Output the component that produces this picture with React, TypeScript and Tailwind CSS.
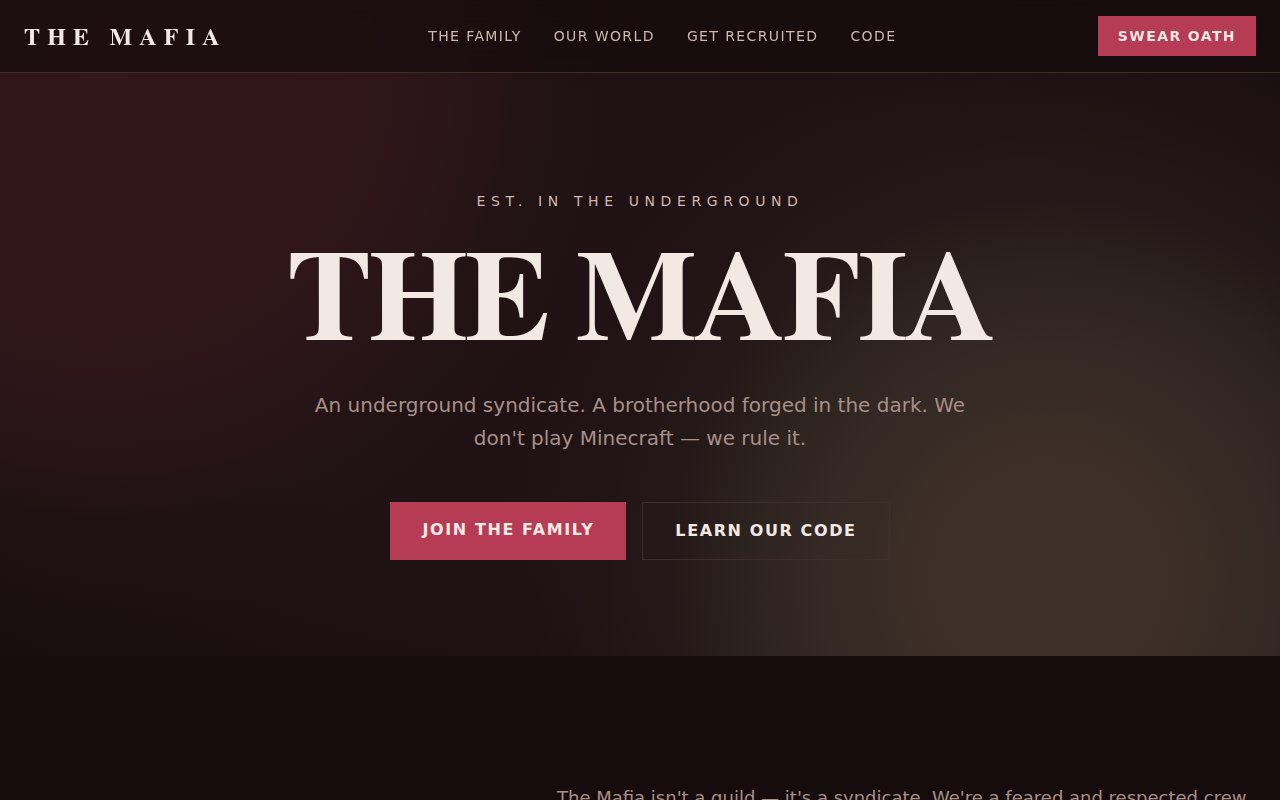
const navLinks = [
  { label: 'The Family', href: '#family' },
  { label: 'Our World', href: '#world' },
  { label: 'Get Recruited', href: '#recruit' },
  { label: 'Code', href: '#code' },
];

function Header() {
  return (
    <header className="sticky top-0 z-10 border-b border-[#3f2e26] bg-[#160c0d]/70 backdrop-blur-md">
      <div className="flex items-center justify-between px-6 py-4">
        <a
          href="#top"
          className="font-['TeX_Gyre_Termes','Liberation_Serif',serif] text-2xl font-bold uppercase tracking-[0.3em] text-[#f3e9e4]"
        >
          The Mafia
        </a>
        <nav className="flex gap-8">
          {navLinks.map((link) => (
            <a key={link.href} href={link.href} className="text-sm uppercase tracking-widest text-[#d0b8ae]">
              {link.label}
            </a>
          ))}
        </nav>
        <a
          href="#recruit"
          className="bg-[#b53c54] px-5 py-[10px] text-sm font-bold uppercase tracking-widest text-[#f3e9e4]"
        >
          Swear Oath
        </a>
      </div>
    </header>
  );
}

function Hero() {
  return (
    <section
      id="top"
      className="-mt-[73px] bg-[radial-gradient(circle_at_82%_88%,#3f2f29_0,#3d2f28_130px,#382b25_180px,#342924_230px,#2c221e_310px,#251b19c0_380px,#24171880_450px,#1e101300_560px),radial-gradient(circle_at_8%_12%,#32171a_0,#301619_250px,#2a1518_350px,#23131580_440px,#1e101300_540px),radial-gradient(ellipse_at_50%_50%,#201214_50%,#180e10_100%)] px-6 pt-[191px] pb-24 text-center"
    >
      <p className="text-sm uppercase tracking-[0.4em] text-[#d0b8ae]">Est. in the underground</p>
      <h1 className="mt-4 font-['TeX_Gyre_Termes','Liberation_Serif',serif] text-9xl font-bold uppercase leading-none tracking-tight text-[#f3e9e4]">
        The Mafia
      </h1>
      <p className="mx-auto mt-[34px] max-w-2xl text-xl leading-[33px] text-[#a88f88]">
        An underground syndicate. A brotherhood forged in the dark. We don't play Minecraft — we rule it.
      </p>
      <div className="mt-[47px] flex flex-wrap justify-center gap-4 font-bold uppercase tracking-widest text-[#f3e9e4]">
        <a href="#recruit" className="bg-[#b53c54] px-8 py-4">
          Join the family
        </a>
        <a href="#code" className="border border-[#3f2e2a] px-8 py-4">
          Learn our code
        </a>
      </div>
    </section>
  );
}

function About() {
  return (
    <section id="family" className="grid grid-cols-[2fr_3fr] gap-[67px] px-6 py-[127px]">
      <p className="col-start-2 text-lg leading-[29px] text-[#a88f88]">
        The Mafia isn't a guild — it's a syndicate. We're a feared and respected crew
      </p>
    </section>
  );
}

export default function App() {
  return (
    <div className="min-h-screen bg-[#160c0d] font-['DejaVu_Sans',sans-serif]">
      <Header />
      <main>
        <Hero />
        <About />
      </main>
    </div>
  );
}
